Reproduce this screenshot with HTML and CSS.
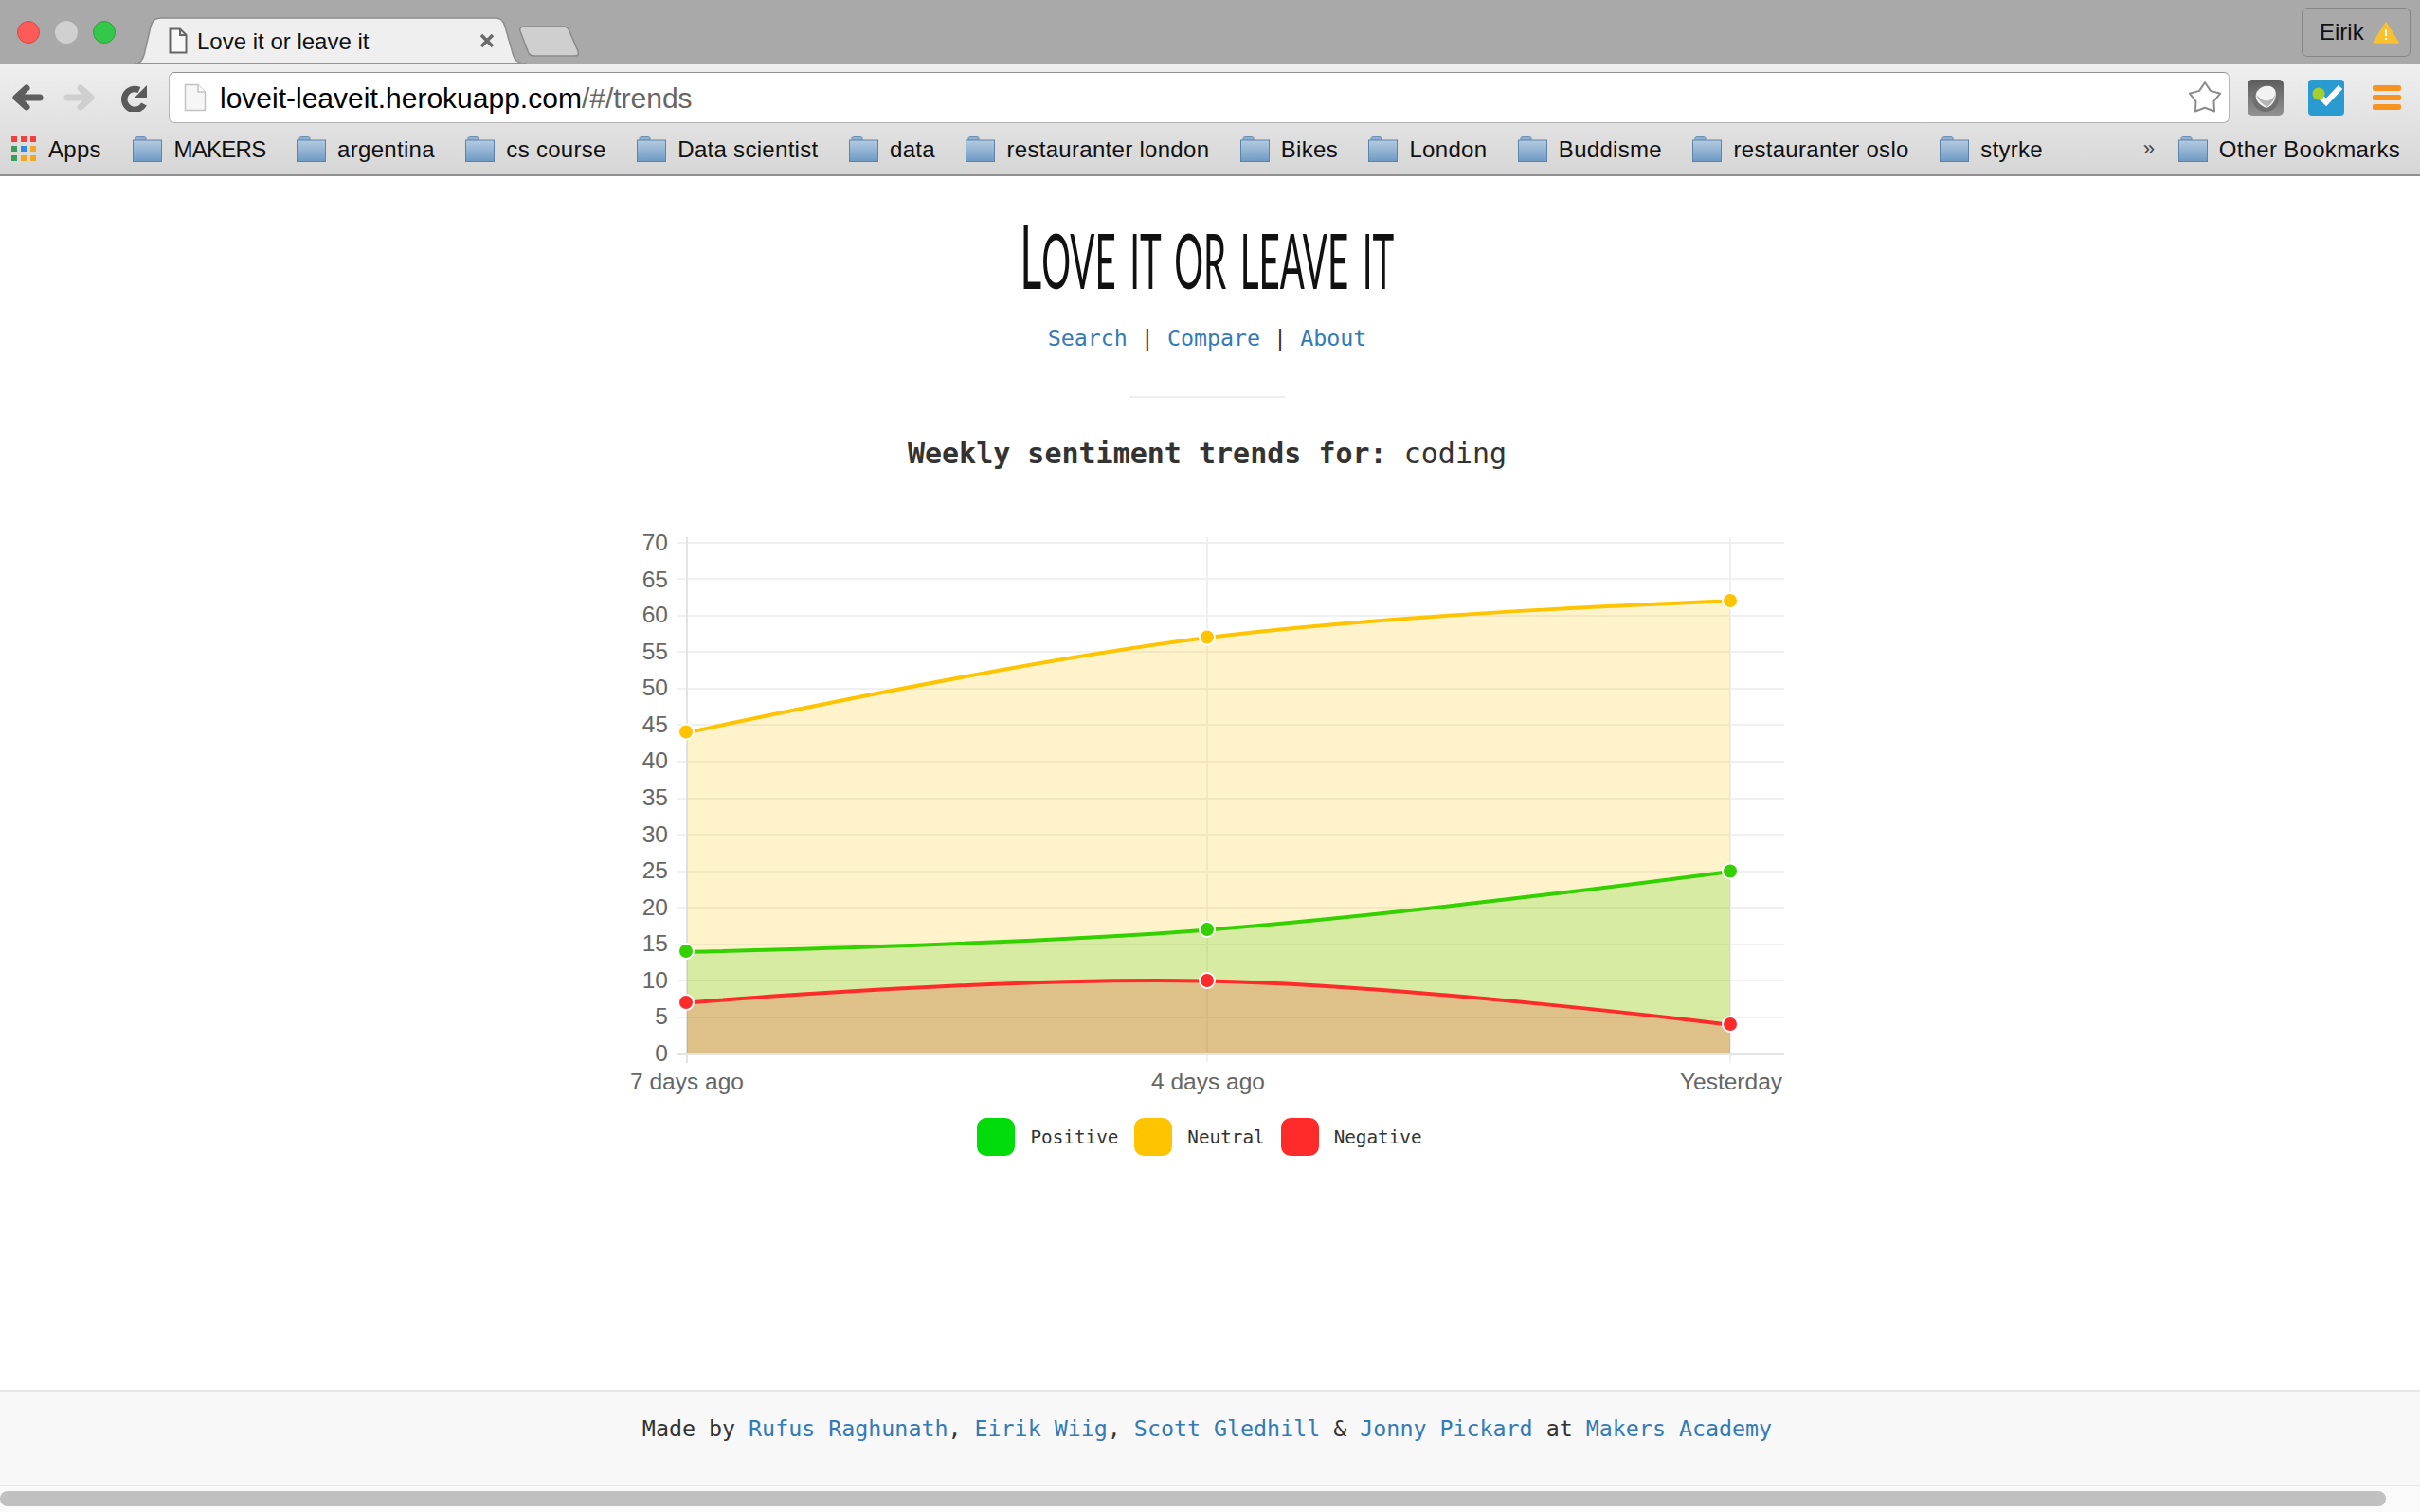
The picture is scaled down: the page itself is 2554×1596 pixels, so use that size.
FILE: index.html
```html
<!DOCTYPE html>
<html lang="en">
<head>
  <meta charset="UTF-8">
  <title>Love it or leave it</title>
  <link rel="stylesheet" href="styles.css">
</head>
<body>
  <div class="tabstrip">
    <div class="lights">
      <span class="light red"></span>
      <span class="light grey"></span>
      <span class="light green"></span>
    </div>
    <div class="tab">
      <svg class="tab-shape" width="413" height="50" viewBox="0 0 413 50">
        <path d="M0 49 C5 49 7 46 9 40 L16 10 C18 3 21 1 27 1 L380 1 C385 1 388 3 390 10 L398 38 C400 46 404 49 413 49 Z" fill="#efefef" stroke="#8d8d8d" stroke-width="1.5"/>
      </svg>
      <svg class="tab-icon" width="20" height="28" viewBox="0 0 20 28">
        <path d="M1.5 1.5 H12 L18.5 8 V26.5 H1.5 Z M12 1.5 V8 H18.5" fill="#f8f8f8" stroke="#666" stroke-width="2"/>
      </svg>
      <span class="tab-title">Love it or leave it</span>
      <svg class="tab-close" width="16" height="16" viewBox="0 0 16 16">
        <path d="M2 2 L14 14 M14 2 L2 14" stroke="#6a6a6a" stroke-width="3.5"/>
      </svg>
    </div>
    <svg class="newtab" width="64" height="34" viewBox="0 0 64 34">
      <path d="M1 6 C0 3 2 1 5 1 L46 1 C50 1 52 3 53 6 L62 27 C63 31 62 32 58 32 L16 32 C12 32 10 31 9 27 Z" fill="#cfcfcf" stroke="#8a8a8a" stroke-width="1.5"/>
    </svg>
    <div class="profile">
      <span>Eirik</span>
      <svg width="28" height="23" viewBox="0 0 28 23">
        <path d="M14 1 L27 22 H1 Z" fill="#fbc02d" stroke="#fbc02d" stroke-width="1.5" stroke-linejoin="round"/>
        <path d="M14 8 V15 M14 17 V19" stroke="#fff" stroke-width="2"/>
      </svg>
    </div>
  </div>

  <div class="chrome">
    <div class="toolbar">
      <svg class="nav-icon" width="146" height="30" viewBox="0 0 146 30">
        <path d="M7 15 H30 M16 5 L5 15 L16 25" fill="none" stroke="#5e5e5e" stroke-width="7" stroke-linecap="round" stroke-linejoin="round"/>
        <path d="M59 15 H82 M73 5 L84 15 L73 25" fill="none" stroke="#cfcfcf" stroke-width="7" stroke-linecap="round" stroke-linejoin="round"/>
        <path d="M135 7 A11 11 0 1 0 140 22" fill="none" stroke="#5a5a5a" stroke-width="6.5"/>
        <path d="M143 2 V15 H130 Z" fill="#5a5a5a"/>
      </svg>
      <div class="omnibox">
        <svg width="24" height="30" viewBox="0 0 24 30">
          <path d="M1.5 1.5 H15 L22.5 9 V28.5 H1.5 Z" fill="#f6f6f6" stroke="#c4c4c4" stroke-width="1.5"/>
          <path d="M15 1.5 V9 H22.5" fill="#fff" stroke="#c4c4c4" stroke-width="1.5"/>
        </svg>
        <span class="url">loveit-leaveit.herokuapp.com<span class="url-path">/#/trends</span></span>
        <svg class="star" width="36" height="36" viewBox="0 0 36 36">
          <path d="M18 2 L23.9 10.9 L34.2 13.7 L27.5 21.9 L28 32.5 L18 28.8 L8 32.5 L8.5 21.9 L1.8 13.7 L12.1 10.9 Z" fill="#fff" stroke="#8c8c8c" stroke-width="2" stroke-linejoin="round"/>
        </svg>
      </div>
      <svg class="ext" width="38" height="38" viewBox="0 0 38 38">
        <defs>
          <linearGradient id="extGrey" x1="0" y1="0" x2="0" y2="1">
            <stop offset="0" stop-color="#5c5c5c"/>
            <stop offset="1" stop-color="#929292"/>
          </linearGradient>
        </defs>
        <rect width="38" height="38" rx="5" fill="url(#extGrey)"/>
        <circle cx="19" cy="20" r="14" fill="#6f6f6f"/>
        <path d="M9 15 C11 7 25 3 29 11 C32 18 27 28 20 30 C14 28 7 22 9 15 Z" fill="#f2f2f2"/>
        <path d="M9 16 C12 23 17 27 21 29 C26 25 29 20 30 14 C27 22 20 24 15 21 Z" fill="#b5b5b5"/>
      </svg>
      <svg class="ext" width="38" height="38" viewBox="0 0 38 38">
        <rect width="38" height="38" rx="4" fill="#2a9bd0"/>
        <path d="M13 18 L19 24 L34 8" fill="none" stroke="#fff" stroke-width="6"/>
        <circle cx="11" cy="15" r="6.5" fill="#a5cf2f"/>
      </svg>
      <div class="menu">
        <span></span>
        <span></span>
        <span></span>
      </div>
    </div>

    <div class="bookmarks">
      <div class="mark apps-mark">
        <div class="apps">
          <i class="r"></i><i class="r"></i><i class="r"></i>
          <i class="g"></i><i class="b"></i><i class="o"></i>
          <i class="g"></i><i class="o"></i><i class="o"></i>
        </div>
        <span>Apps</span>
      </div>
      <div class="mark makers"><svg class="folder" viewBox="0 0 31 27"><use href="#folder"/></svg><span>MAKERS</span></div>
      <div class="mark"><svg class="folder" viewBox="0 0 31 27"><use href="#folder"/></svg><span>argentina</span></div>
      <div class="mark"><svg class="folder" viewBox="0 0 31 27"><use href="#folder"/></svg><span>cs course</span></div>
      <div class="mark"><svg class="folder" viewBox="0 0 31 27"><use href="#folder"/></svg><span>Data scientist</span></div>
      <div class="mark"><svg class="folder" viewBox="0 0 31 27"><use href="#folder"/></svg><span>data</span></div>
      <div class="mark"><svg class="folder" viewBox="0 0 31 27"><use href="#folder"/></svg><span>restauranter london</span></div>
      <div class="mark"><svg class="folder" viewBox="0 0 31 27"><use href="#folder"/></svg><span>Bikes</span></div>
      <div class="mark"><svg class="folder" viewBox="0 0 31 27"><use href="#folder"/></svg><span>London</span></div>
      <div class="mark"><svg class="folder" viewBox="0 0 31 27"><use href="#folder"/></svg><span>Buddisme</span></div>
      <div class="mark"><svg class="folder" viewBox="0 0 31 27"><use href="#folder"/></svg><span>restauranter oslo</span></div>
      <div class="mark"><svg class="folder" viewBox="0 0 31 27"><use href="#folder"/></svg><span>styrke</span></div>
      <span class="more">»</span>
      <div class="mark"><svg class="folder" viewBox="0 0 31 27"><use href="#folder"/></svg><span>Other Bookmarks</span></div>
    </div>
  </div>

  <svg class="defs" width="0" height="0">
    <defs>
      <linearGradient id="folderFill" x1="0" y1="0" x2="0" y2="1">
        <stop offset="0" stop-color="#b4cbe3"/>
        <stop offset="1" stop-color="#6f9ac3"/>
      </linearGradient>
      <g id="folder">
        <path d="M3 4 V2 C3 1 4 .5 5 .5 H12 C13 .5 14 1 14 2 V4" fill="#8fb0d2" stroke="#6f8fb0"/>
        <rect x=".5" y="4" width="30" height="22.5" fill="url(#folderFill)" stroke="#5f82a6"/>
      </g>
    </defs>
  </svg>

  <main class="page">
    <h1 class="title">Love it or leave it</h1>
    <p class="links"><a href="#">Search</a> | <a href="#">Compare</a> | <a href="#">About</a></p>
    <hr class="rule">
    <h2 class="heading"><b>Weekly sentiment trends for:</b> coding</h2>

    <svg class="chart" width="1254" height="624" viewBox="647 540 1254 624">
      <g class="grid">
        <path d="M714 573 H1883"/><path d="M714 611 H1883"/><path d="M714 650 H1883"/>
        <path d="M714 688 H1883"/><path d="M714 727 H1883"/><path d="M714 765 H1883"/>
        <path d="M714 804 H1883"/><path d="M714 843 H1883"/><path d="M714 881 H1883"/>
        <path d="M714 920 H1883"/><path d="M714 958 H1883"/><path d="M714 997 H1883"/>
        <path d="M714 1035 H1883"/><path d="M714 1074 H1883"/>
        <path d="M1274 567 V1122"/><path d="M1826 567 V1122"/>
      </g>
      <path class="axis" d="M714 1113 H1883 M725 567 V1122"/>

      <path class="area-neutral" d="M725 773.4 C725 773.4 1054 700.9 1274 673.1 C1494 645.3 1826 634.5 1826 634.5 V1112 H725 Z"/>
      <path class="line-neutral" d="M725 773.4 C725 773.4 1054 700.9 1274 673.1 C1494 645.3 1826 634.5 1826 634.5"/>
      <path class="area-positive" d="M725 1004.7 C725 1004.7 1054 998.5 1274 981.5 C1494 964.5 1826 919.9 1826 919.9 V1112 H725 Z"/>
      <path class="line-positive" d="M725 1004.7 C725 1004.7 1054 998.5 1274 981.5 C1494 964.5 1826 919.9 1826 919.9"/>
      <path class="area-negative" d="M725 1058.6 C725 1058.6 1054 1030.9 1274 1035.5 C1494 1040.1 1826 1081.8 1826 1081.8 V1112 H725 Z"/>
      <path class="line-negative" d="M725 1058.6 C725 1058.6 1054 1030.9 1274 1035.5 C1494 1040.1 1826 1081.8 1826 1081.8"/>

      <g class="dot dot-neutral">
        <circle cx="724" cy="772.5" r="8"/><circle cx="1274" cy="672.5" r="8"/><circle cx="1826" cy="634" r="8"/>
      </g>
      <g class="dot dot-positive">
        <circle cx="724" cy="1004" r="8"/><circle cx="1274" cy="981" r="8"/><circle cx="1826" cy="919.5" r="8"/>
      </g>
      <g class="dot dot-negative">
        <circle cx="724" cy="1058" r="8"/><circle cx="1274" cy="1035" r="8"/><circle cx="1826" cy="1081" r="8"/>
      </g>

      <g class="ticks-y">
        <text x="705" y="581">70</text><text x="705" y="620">65</text><text x="705" y="657">60</text>
        <text x="705" y="696">55</text><text x="705" y="734">50</text><text x="705" y="773">45</text>
        <text x="705" y="811">40</text><text x="705" y="850">35</text><text x="705" y="889">30</text>
        <text x="705" y="927">25</text><text x="705" y="966">20</text><text x="705" y="1004">15</text>
        <text x="705" y="1043">10</text><text x="705" y="1081">5</text><text x="705" y="1120">0</text>
      </g>
      <g class="ticks-x">
        <text x="725" y="1150">7 days ago</text>
        <text x="1275" y="1150">4 days ago</text>
        <text x="1827" y="1150">Yesterday</text>
      </g>
    </svg>

    <ul class="legend">
      <li><span class="swatch positive"></span>Positive</li>
      <li><span class="swatch neutral"></span>Neutral</li>
      <li><span class="swatch negative"></span>Negative</li>
    </ul>
  </main>

  <footer class="footer">
    Made by <a href="#">Rufus Raghunath</a>, <a href="#">Eirik Wiig</a>, <a href="#">Scott Gledhill</a> &amp; <a href="#">Jonny Pickard</a> at <a href="#">Makers Academy</a>
  </footer>
  <div class="scrollbar"><div class="thumb"></div></div>
</body>
</html>
```

FILE: styles.css
```css
html, body {
  height: 100%;
}
body {
  margin: 0;
  height: 1596px;
  width: 2554px;
  overflow: hidden;
  display: flex;
  flex-direction: column;
  background-color: #fff;
  font-family: "Liberation Sans", Arial, sans-serif;
  color: #333;
}
a {
  color: #337ab7;
  text-decoration: none;
}

/* browser window */
.tabstrip {
  height: 68px;
  flex: none;
  display: flex;
  align-items: flex-end;
  background-color: #a9a9a9;
  position: relative;
}
.lights {
  width: 143px;
  height: 68px;
  flex: none;
  display: flex;
  gap: 16px;
  padding: 22px 0 0 18px;
  box-sizing: border-box;
}
.light {
  width: 24px;
  height: 24px;
  border-radius: 50%;
  box-sizing: border-box;
}
.light.red {
  background-color: #fc5b57;
  border: 1px solid #df4744;
}
.light.grey {
  background-color: #d0d0d0;
}
.light.green {
  background-color: #34c84a;
  border: 1px solid #2aa63c;
}
.tab {
  width: 413px;
  height: 50px;
  flex: none;
  position: relative;
  display: flex;
  align-items: center;
  padding: 0 0 0 35px;
  box-sizing: border-box;
  font-size: 24px;
  color: #111;
  z-index: 1;
}
.tab-shape {
  position: absolute;
  left: 0;
  top: 0;
}
.tab-icon, .tab-title, .tab-close {
  position: relative;
}
.tab-title {
  margin-left: 10px;
  width: 298px;
  padding-top: 2px;
}
.newtab {
  flex: none;
  margin: 0 0 7px -8px;
}
.profile {
  position: absolute;
  left: 2429px;
  top: 8px;
  width: 115px;
  height: 52px;
  box-sizing: border-box;
  border: 1px solid #868686;
  border-radius: 6px;
  display: flex;
  align-items: center;
  gap: 9px;
  padding-left: 18px;
  font-size: 24px;
  color: #111;
}
.chrome {
  height: 118px;
  flex: none;
  box-sizing: border-box;
  border-bottom: 2px solid #8f8f8f;
  background: linear-gradient(#efefef, #d6d6d6);
}
.toolbar {
  height: 62px;
  display: flex;
  align-items: flex-start;
  padding-top: 8px;
  box-sizing: border-box;
}
.nav-icon {
  flex: none;
  margin: 12px 0 0 12px;
}
.omnibox {
  width: 2175px;
  height: 54px;
  flex: none;
  margin-left: 20px;
  box-sizing: border-box;
  border: 1px solid #b5b5b5;
  border-top-color: #8f8f8f;
  border-radius: 6px;
  background-color: #fff;
  display: flex;
  align-items: center;
  padding-left: 15px;
  position: relative;
}
.url {
  margin-left: 14px;
  padding-top: 2px;
  font-size: 30px;
  color: #000;
}
.url-path {
  color: #666;
}
.star {
  position: absolute;
  right: 7px;
  top: 8px;
}
.ext {
  flex: none;
  margin: 8px 0 0 19px;
}
.ext + .ext {
  margin-left: 26px;
}
.menu {
  width: 30px;
  flex: none;
  margin: 14px 0 0 30px;
  display: flex;
  flex-direction: column;
  gap: 4px;
}
.menu span {
  height: 6px;
  border-radius: 2px;
  background-color: #f7931e;
}
.bookmarks {
  height: 54px;
  display: flex;
  align-items: center;
  padding: 0 21px 0 12px;
  gap: 32.5px;
  font-size: 24px;
  letter-spacing: 0.3px;
  color: #111;
}
.mark {
  display: flex;
  align-items: center;
  gap: 12px;
  white-space: nowrap;
}
.mark span {
  padding-top: 2px;
}
.apps-mark {
  gap: 13px;
  margin-right: 1px;
}
.makers {
  letter-spacing: -0.7px;
}
.apps {
  display: grid;
  grid-template-columns: repeat(3, 6px);
  grid-auto-rows: 6px;
  gap: 4px;
}
.apps i.r { background-color: #f04040; }
.apps i.g { background-color: #3a9e5b; }
.apps i.b { background-color: #2b8de8; }
.apps i.o { background-color: #f5a623; }
.folder {
  width: 31px;
  height: 27px;
  flex: none;
}
.more {
  margin: 0 -8px 0 auto;
  font-size: 22px;
  color: #444;
}
.defs {
  position: absolute;
}

/* page */
.page {
  flex: 1;
  display: flex;
  flex-direction: column;
  align-items: center;
  padding-right: 6px;
  font-family: "DejaVu Sans Mono", monospace;
}
.title {
  display: inline-block;
  margin: 33px 0 0 0;
  height: 100px;
  line-height: 100px;
  font-family: Lato, sans-serif;
  font-weight: 400;
  font-size: 82px;
  word-spacing: 10px;
  text-transform: uppercase;
  white-space: nowrap;
  color: #111;
  transform: scaleX(0.47);
}
.title::first-letter {
  font-size: 94px;
}
.links {
  margin: 18px 0 0 0;
  line-height: 40px;
  font-size: 23.3px;
}
.rule {
  width: 164px;
  height: 2px;
  margin: 41px 0 0 0;
  border: 0;
  background-color: #eee;
}
.heading {
  margin: 39px 0 0 0;
  line-height: 40px;
  font-size: 30px;
  font-weight: 400;
}
.chart {
  flex: none;
  margin-top: 41px;
}
.grid path {
  stroke: #f0f0f0;
  stroke-width: 2;
  fill: none;
}
.axis {
  stroke: #e4e4e4;
  stroke-width: 2;
  fill: none;
}
.area-neutral { fill: rgba(255, 196, 0, 0.2); }
.area-positive { fill: rgba(58, 207, 0, 0.2); }
.area-negative { fill: rgba(244, 25, 31, 0.2); }
.line-neutral, .line-positive, .line-negative {
  fill: none;
  stroke-width: 4;
}
.line-neutral { stroke: #ffc400; }
.line-positive { stroke: #33d100; }
.line-negative { stroke: #ff2a2a; }
.dot circle {
  stroke: #fff;
  stroke-width: 2;
}
.dot-neutral { fill: #ffc400; }
.dot-positive { fill: #33d100; }
.dot-negative { fill: #ff2a2a; }
.ticks-y text, .ticks-x text {
  font-family: "Liberation Sans", Arial, sans-serif;
  font-size: 24.5px;
  fill: #666;
}
.ticks-y text {
  text-anchor: end;
}
.ticks-x text {
  text-anchor: middle;
}
.legend {
  list-style: none;
  display: flex;
  gap: 17px;
  margin: 16px 16px 0 0;
  padding: 0;
  font-size: 19.3px;
}
.legend li {
  display: flex;
  align-items: center;
  gap: 16px;
}
.swatch {
  width: 40px;
  height: 40px;
  border-radius: 10px;
}
.swatch.positive { background-color: #00dc0a; }
.swatch.neutral { background-color: #ffc400; }
.swatch.negative { background-color: #ff2a2a; }

.footer {
  height: 102px;
  flex: none;
  box-sizing: border-box;
  padding: 21px 6px 0 0;
  border-top: 2px solid #e7e7e7;
  border-bottom: 2px solid #e7e7e7;
  background-color: #f8f8f8;
  text-align: center;
  font-family: "DejaVu Sans Mono", monospace;
  font-size: 23.3px;
  line-height: 36px;
}
.scrollbar {
  height: 27px;
  flex: none;
  box-sizing: border-box;
  padding-top: 5px;
  background-color: #fafafa;
}
.thumb {
  width: 2518px;
  height: 16px;
  border-radius: 8px;
  background-color: #c0c0c0;
}
```
